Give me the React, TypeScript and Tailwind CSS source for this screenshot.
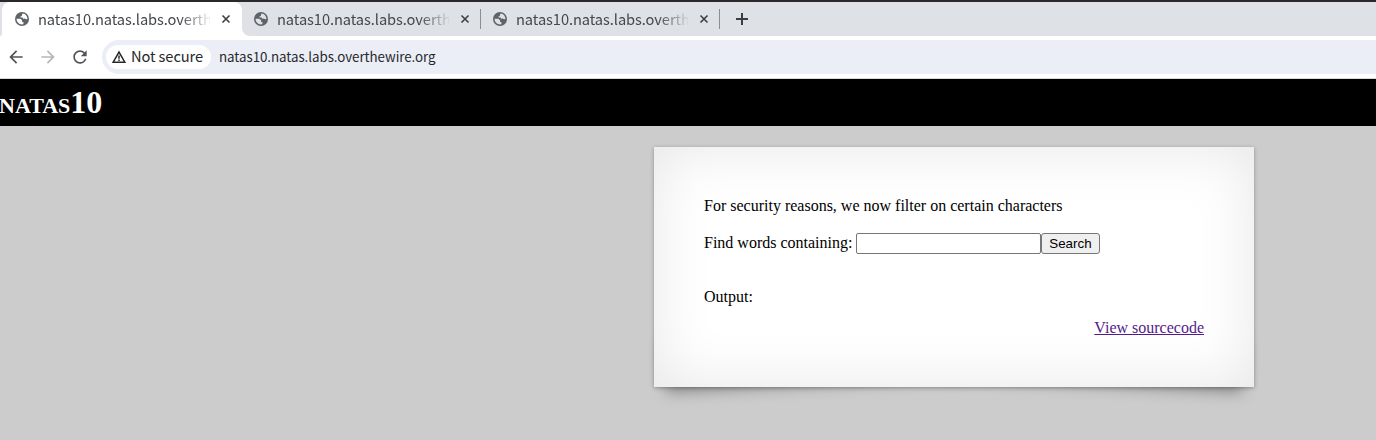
import { MdArrowBack, MdArrowForward, MdRefresh } from "react-icons/md";

function Globe({ land }: { land: string }) {
  return (
    <svg className="size-4 shrink-0 text-[#5f6368]" viewBox="0 0 16 16" fill="none">
      <circle cx="8" cy="8" r="7" fill="currentColor" />
      <path className={land} d="M8.700 2.600c2.600.3 4.700 2.600 4.700 5.300l-1.200.4-1.500-.7-1.700.1-.3-1.200-1.900-.1-.5-1 1.500-.5.3-1.300Z" />
      <path className={land} d="M2.600 7.700 6.300 7.800l1.800 1.500v1.600l1.500.3-.3 2.100C5.700 14 2.500 11.500 2.600 7.700Z" />
    </svg>
  );
}

function Tab({ active = false }: { active?: boolean }) {
  return (
    <div className={active ? "flex h-[34px] w-60 shrink-0 items-center rounded-t-lg bg-white pl-3" : "flex h-[34px] w-[238px] shrink-0 items-center rounded-bl-lg bg-[#dee1e6] pl-[11px]"}>
      <Globe land={active ? "fill-white" : "fill-[#dee1e6]"} />
      <span className="-mt-px ml-2 w-[172px] overflow-hidden whitespace-nowrap text-[14.667px] tracking-[-0.08px] text-[#45484c] [mask-image:linear-gradient(to_right,black_142px,transparent_174px)]">
        natas10.natas.labs.overthewire.org
      </span>
      <svg className="ml-2.5 size-3 shrink-0" viewBox="0 0 12 12" fill="none" stroke="#3c4043" strokeWidth="1.6">
        <path d="m2.500 2.500 7 7M9.500 2.500l-7 7" />
      </svg>
    </div>
  );
}

export default function App() {
  return (
    <div className="flex h-[440px] w-[1376px] flex-col overflow-hidden bg-[#ccc] text-black">
      <div className="font-['Noto_Sans_CJK_SC',sans-serif]">
        <div className="flex h-9 border-t-2 border-[#2b2829] bg-white">
          <div className="w-0.5 rounded-br-lg bg-[#dee1e6]" />
          <div className="flex flex-1 bg-[linear-gradient(#dee1e6,#dee1e6)] bg-[length:100%_17px] bg-no-repeat">
            <Tab active />
            <Tab />
            <div className="flex flex-1 bg-[#dee1e6]">
              <div className="mt-[7px] h-5 w-px bg-[#8a8d91]" />
              <Tab />
              <div className="mt-[7px] h-5 w-px bg-[#8a8d91]" />
              <svg className="mt-2 ml-[13px] size-[18px]" viewBox="0 0 18 18" fill="none" stroke="#3c4043" strokeWidth="2">
                <path d="M9 3v12M3 9h12" />
              </svg>
            </div>
          </div>
        </div>
        <div className="flex h-[43px] items-center border-b border-[#d5d7da] bg-white pl-1.5">
          <MdArrowBack className="size-5 text-[#505458]" />
          <MdArrowForward className="ml-3 size-5 text-[#b5b7b9]" />
          <MdRefresh className="ml-3 size-5 text-[#505458]" />
          <div className="ml-3 flex h-[34px] flex-1 items-center rounded-l-full bg-[#ebeef7] pl-1">
            <div className="flex h-6 w-[105px] items-center rounded-full bg-white pl-[5px] text-[14.667px] tracking-[-0.1px] whitespace-nowrap text-[#27282a]">
              <svg className="mr-1 size-4 shrink-0" viewBox="0 0 16 16" fill="none" stroke="currentColor" strokeWidth="1.5">
                <path d="M2.200 13.200 8 3.100l5.800 10.100Z" />
                <path d="M8 6.500v3.200M8 10.500v1.400" />
              </svg>
              <span className="-mt-0.5">Not secure</span>
            </div>
            <span className="ml-2 text-[13.333px] tracking-[-0.05px] text-[#27282a]">natas10.natas.labs.overthewire.org</span>
          </div>
        </div>
      </div>
      <div className="font-['Liberation_Serif',serif] text-base leading-[18px]">
        <h1 className="h-[47px] bg-black text-[32px] leading-[47px] font-bold text-white [font-variant:small-caps]">
          <span className="-ml-px">natas10</span>
        </h1>
        <div className="relative isolate mt-[21px] ml-[654px] h-60 w-[600px]">
          <div className="absolute bottom-[15px] left-2.5 -z-10 h-12 w-[300px] -rotate-3 shadow-[0_12px_15px_rgba(0,0,0,0.36)]" />
          <div className="absolute right-2.5 bottom-[15px] -z-10 h-12 w-[300px] rotate-3 shadow-[0_12px_15px_rgba(0,0,0,0.36)]" />
          <div className="h-full bg-white px-[50px] pt-[50px] shadow-[0_1px_4px_rgba(0,0,0,0.3),inset_0_0_60px_rgba(0,0,0,0.1)]">
            <p>For security reasons, we now filter on certain characters</p>
            <form className="mt-[18px] flex h-[21px] items-center" onSubmit={(e) => e.preventDefault()}>
              <label htmlFor="needle" className="mr-1 -mt-px">Find words containing:</label>
              <input id="needle" className="h-[21px] w-[185px] rounded-[2px] border border-[#767676] bg-white px-1" />
              <button className="h-[21px] w-[59px] rounded-[3px] border border-[#767676] bg-[#efefef] pr-px font-['Liberation_Sans',sans-serif] text-[13.333px] leading-none">Search</button>
            </form>
            <p className="mt-[34px]">Output:</p>
            <div className="mt-[13px] text-right">
              <a href="#" className="text-[#551a8b] underline">View sourcecode</a>
            </div>
          </div>
        </div>
      </div>
    </div>
  );
}
